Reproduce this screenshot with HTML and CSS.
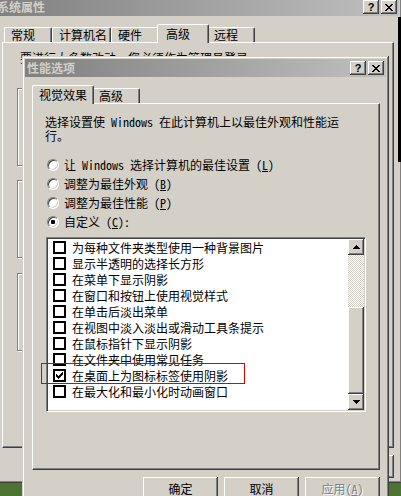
FILE: index.html
```html
<!DOCTYPE html>
<html lang="zh-CN">
<head>
<meta charset="utf-8">
<title>性能选项</title>
<link rel="stylesheet" href="styles.css">
</head>
<body>
<div class="desktop">
  <div class="win win-back">
    <div class="titlebar">
      <span class="title">系统属性</span>
      <div class="tbtns">
        <span class="tbtn raised"><span class="q">?</span></span>
        <span class="tbtn raised">
          <svg width="8" height="7" viewBox="0 0 8 7"><path d="M0 0h2v1h-2zM6 0h2v1h-2zM1 1h2v1h-2zM5 1h2v1h-2zM2 2h4v1h-4zM3 3h2v1h-2zM2 4h4v1h-4zM1 5h2v1h-2zM5 5h2v1h-2zM0 6h2v1h-2zM6 6h2v1h-2z" fill="#000"/></svg>
        </span>
      </div>
    </div>
    <div class="content content-back">
      <div class="tabstrip">
        <div class="tab t48">常规</div>
        <div class="tab t59">计算机名</div>
        <div class="tab t48">硬件</div>
        <div class="tab t48 sel">高级</div>
        <div class="tab t48">远程</div>
      </div>
      <div class="panel panel-back">
        <p class="back-note">要进行大多数改动，您必须作为管理员登录。</p>
        <div class="group g1"></div>
        <div class="group g2"></div>
        <div class="group g3"></div>
      </div>
      <div class="btnrow">
        <span class="btn raised">确定</span>
        <span class="btn raised">取消</span>
        <span class="btn raised disabled">应用(<u>A</u>)</span>
      </div>
    </div>
  </div>

  <div class="blackstrip"></div>

  <div class="win win-front">
    <div class="titlebar">
      <span class="title">性能选项</span>
      <div class="tbtns">
        <span class="tbtn raised"><span class="q">?</span></span>
        <span class="tbtn raised">
          <svg width="8" height="7" viewBox="0 0 8 7"><path d="M0 0h2v1h-2zM6 0h2v1h-2zM1 1h2v1h-2zM5 1h2v1h-2zM2 2h4v1h-4zM3 3h2v1h-2zM2 4h4v1h-4zM1 5h2v1h-2zM5 5h2v1h-2zM0 6h2v1h-2zM6 6h2v1h-2z" fill="#000"/></svg>
        </span>
      </div>
    </div>
    <div class="content content-front">
      <div class="tabstrip">
        <div class="tab t58 sel">视觉效果</div>
        <div class="tab t48">高级</div>
      </div>
      <div class="panel panel-front">
        <p class="desc">选择设置使 Windows 在此计算机上以最佳外观和性能运<br>行。</p>
        <div class="radios">
          <div class="radio-row"><span class="radio"></span><span>让 Windows 选择计算机的最佳设置 (<u>L</u>)</span></div>
          <div class="radio-row"><span class="radio"></span><span>调整为最佳外观 (<u>B</u>)</span></div>
          <div class="radio-row"><span class="radio"></span><span>调整为最佳性能 (<u>P</u>)</span></div>
          <div class="radio-row"><span class="radio on"></span><span>自定义 (<u>C</u>):</span></div>
        </div>
        <div class="list">
          <ul class="items">
            <li class="item"><span class="cb"></span>为每种文件夹类型使用一种背景图片</li>
            <li class="item"><span class="cb"></span>显示半透明的选择长方形</li>
            <li class="item"><span class="cb"></span>在菜单下显示阴影</li>
            <li class="item"><span class="cb"></span>在窗口和按钮上使用视觉样式</li>
            <li class="item"><span class="cb"></span>在单击后淡出菜单</li>
            <li class="item"><span class="cb"></span>在视图中淡入淡出或滑动工具条提示</li>
            <li class="item"><span class="cb"></span>在鼠标指针下显示阴影</li>
            <li class="item"><span class="cb"></span>在文件夹中使用常见任务</li>
            <li class="item"><span class="cb"><svg width="9" height="9" viewBox="0 0 9 9"><path d="M7 1h1v1h-1zM6 2h2v1h-2zM1 3h1v1h-1zM5 3h3v1h-3zM1 4h2v1h-2zM4 4h3v1h-3zM1 5h5v1h-5zM2 6h3v1h-3zM3 7h1v1h-1z" fill="#000"/></svg></span>在桌面上为图标标签使用阴影</li>
            <li class="item"><span class="cb"></span>在最大化和最小化时动画窗口</li>
          </ul>
          <div class="sb">
            <span class="sb-btn raised"><svg width="7" height="4" viewBox="0 0 7 4"><path d="M3 0h1v1h1v1h1v1h1v1h-7v-1h1v-1h1v-1h1z" fill="#000"/></svg></span>
            <span class="sb-track"></span>
            <span class="sb-thumb raised"></span>
            <span class="sb-btn raised"><svg width="7" height="4" viewBox="0 0 7 4"><path d="M0 0h7v1h-1v1h-1v1h-1v1h-1v-1h-1v-1h-1v-1h-1z" fill="#000"/></svg></span>
          </div>
        </div>
      </div>
      <div class="btnrow">
        <span class="btn raised">确定</span>
        <span class="btn raised">取消</span>
        <span class="btn raised disabled">应用(<u>A</u>)</span>
      </div>
    </div>
  </div>

  <div class="annot"></div>
</div>
</body>
</html>
```
FILE: styles.css
```css
* { box-sizing: border-box; }
html, body { margin: 0; padding: 0; }
body {
  width: 401px;
  height: 496px;
  overflow: hidden;
  font-family: "Noto Sans Mono CJK SC", "Noto Sans CJK SC", sans-serif;
  font-size: 12px;
  color: #000;
}
u { text-decoration: underline; text-underline-offset: 1px; }

.desktop {
  position: relative;
  width: 401px;
  height: 496px;
  overflow: hidden;
  background: linear-gradient(180deg, #3a5a25 0%, #4b7431 100%);
}

.raised {
  background: #d4d0c8;
  box-shadow: inset -1px -1px #404040, inset 1px 1px #fff, inset -2px -2px #808080, inset 2px 2px #d4d0c8;
}

.win {
  position: absolute;
  display: flex;
  flex-direction: column;
  padding: 3px;
  background: #d4d0c8;
  box-shadow: inset -1px -1px #404040, inset 1px 1px #d4d0c8, inset -2px -2px #808080, inset 2px 2px #fff;
}
.win-back { left: -8px; top: -5px; width: 410px; height: 488px; }
.win-front { left: 22px; top: 56px; width: 367px; height: 470px; }

.titlebar {
  height: 18px;
  flex: none;
  display: flex;
  align-items: center;
  padding: 0 2px 0 2px;
  background: linear-gradient(90deg, #808080 0%, #c0c0c0 100%);
}
.title {
  flex: 1;
  font-weight: 700;
  color: #d4d0c8;
  line-height: 18px;
  white-space: nowrap;
}
.tbtns { display: flex; gap: 2px; }
.tbtn {
  width: 16px;
  height: 14px;
  display: flex;
  align-items: center;
  justify-content: center;
}
.q {
  font-family: "Liberation Sans", sans-serif;
  font-weight: 700;
  font-size: 11px;
  line-height: 11px;
}

.content { display: flex; flex-direction: column; padding-top: 8px; }
.content-back { padding-left: 7px; padding-right: 5px; }
.content-front { padding-left: 7px; padding-right: 6px; }

.tabstrip {
  display: flex;
  align-items: flex-end;
  height: 18px;
  padding-left: 2px;
  position: relative;
  z-index: 1;
}
.tab {
  height: 15px;
  padding-left: 6px;
  line-height: 14px;
  white-space: nowrap;
  background: #d4d0c8;
  border-top: 1px solid #fff;
  border-left: 1px solid #fff;
  border-right: 1px solid #404040;
  box-shadow: inset -1px 0 #808080;
  border-radius: 2px 2px 0 0;
}
.t48 { width: 48px; }
.t58 { width: 58px; }
.t59 { width: 59px; }
.tab.sel {
  height: 19px;
  margin: 0 -2px -1px -2px;
  padding-left: 8px;
  line-height: 18px;
  position: relative;
  z-index: 2;
}
.tab.sel.t48 { width: 52px; }
.tab.sel.t58 { width: 62px; padding-left: 6px; }

.panel {
  background: #d4d0c8;
  border-top: 1px solid #fff;
  border-left: 1px solid #fff;
  border-right: 1px solid #404040;
  border-bottom: 1px solid #404040;
  box-shadow: inset -1px -1px #808080;
  display: flex;
  flex-direction: column;
}
.panel-back { height: 406px; padding: 8px 0 0 17px; }
.panel-front { height: 367px; padding: 11px 0 0 12px; }

.back-note { margin: 0; line-height: 14px; white-space: nowrap; }
.group {
  margin-left: -3px;
  width: 360px;
  height: 78px;
  border: 1px solid #808080;
  box-shadow: inset 1px 1px #fff, 1px 1px #fff;
}
.g1 { margin-top: 23px; }
.g2 { margin-top: 14px; }
.g3 { margin-top: 15px; }

.desc { margin: 0; line-height: 14px; white-space: nowrap; }

.radios { margin-top: 12px; display: flex; flex-direction: column; }
.radio-row {
  height: 19px;
  display: flex;
  align-items: center;
  gap: 5px;
  padding-left: 2px;
  white-space: nowrap;
}
.radio {
  width: 12px;
  height: 12px;
  flex: none;
  border-radius: 50%;
  background: #fff;
  border: 1px solid;
  border-color: #808080 #fff #fff #808080;
  box-shadow: inset 1px 1px #404040, inset -1px -1px #d4d0c8;
  position: relative;
}
.radio.on::after {
  content: "";
  position: absolute;
  left: 3px;
  top: 3px;
  width: 4px;
  height: 4px;
  border-radius: 1px;
  background: #000;
}

.list {
  margin: 6px 0 0 1px;
  width: 320px;
  height: 175px;
  display: flex;
  padding: 1px;
  background: #fff;
  border: 1px solid;
  border-color: #808080 #fff #fff #808080;
  box-shadow: inset 1px 1px #404040, inset -1px -1px #d4d0c8;
}
.items { flex: 1; list-style: none; margin: 0; padding: 0; }
.item {
  height: 16px;
  display: flex;
  align-items: center;
  gap: 6px;
  padding-left: 5px;
  white-space: nowrap;
}
.cb {
  width: 13px;
  height: 13px;
  flex: none;
  border: 2px solid #000;
  background: #fff;
  display: flex;
}

.sb { width: 16px; flex: none; display: flex; flex-direction: column; }
.sb-btn {
  height: 16px;
  flex: none;
  display: flex;
  align-items: center;
  justify-content: center;
}
.sb-track {
  height: 52px;
  flex: none;
  background-color: #fff;
  background-image: conic-gradient(#d4d0c8 0 25%, #fff 0 50%, #d4d0c8 0 75%, #fff 0);
  background-size: 2px 2px;
}
.sb-thumb { flex: 1; }

.btnrow {
  display: flex;
  justify-content: flex-end;
  gap: 6px;
  margin-top: 7px;
}
.btn {
  width: 75px;
  height: 23px;
  display: flex;
  align-items: center;
  justify-content: center;
  white-space: nowrap;
}
.btn.disabled { color: #808080; text-shadow: 1px 1px #fff; }

.blackstrip {
  position: absolute;
  left: 398px;
  top: 17px;
  width: 3px;
  height: 145px;
  background: #000;
}
.annot {
  position: absolute;
  left: 41px;
  top: 363px;
  width: 204px;
  height: 21px;
  border: 1px solid #e00000;
}
```
